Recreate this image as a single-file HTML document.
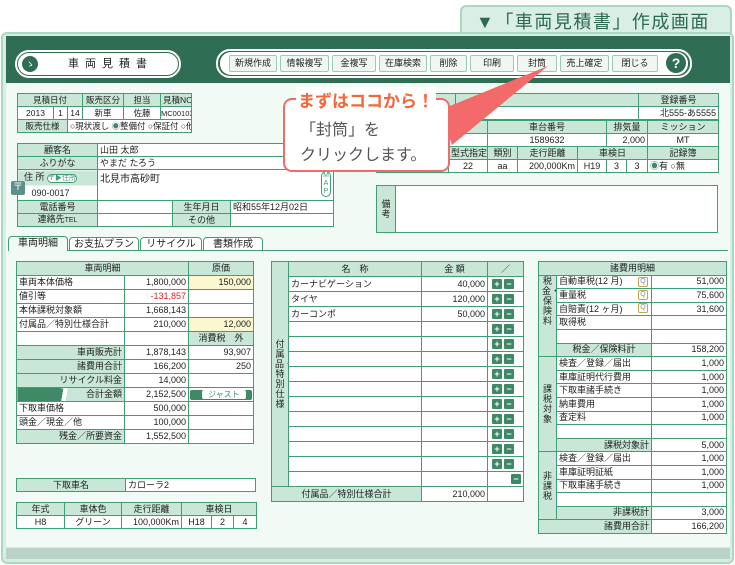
<!DOCTYPE html>
<html><head><meta charset="utf-8"><style>
*{margin:0;padding:0;box-sizing:border-box}
body{width:735px;height:565px;position:relative;background:#fff;font-family:"Liberation Sans","Noto Sans CJK JP",sans-serif;color:#222;overflow:hidden}
.a{position:absolute}
table{position:absolute;border-collapse:collapse;table-layout:fixed;font-size:9px;background:#fff}
td{border:1px solid #3f9e72;padding:0 2px;height:13px;line-height:11px;white-space:nowrap;overflow:hidden}
.h{background:#c8e7d7;text-align:center}
.r{text-align:right}.c{text-align:center}
.y{background:#fbf8cf}
.btn{position:absolute;top:55px;height:17px;background:#eef7f2;border:1px solid #9fc9b4;font-size:9px;line-height:15px;text-align:center;border-radius:2px}
.pm{display:inline-block;width:10px;height:10px;background:#3f8a66;color:#fff;font-size:9px;line-height:10px;text-align:center;margin-left:2px;font-weight:bold;border-radius:1px}
.v{white-space:normal;font-size:9px;line-height:10px;padding:0 3px}
.L td{height:14px}
.M td{height:15px}
.R td{height:13.6px}
</style></head><body>
<div class="a" style="left:460px;top:5px;width:272px;height:34px;background:#d9efe5;border:2px solid #a9d9c1;border-radius:6px 6px 0 0"></div>
<div class="a" style="left:476px;top:8px;font-size:18px;color:#2b6a4e;letter-spacing:1.5px">▼「車両見積書」作成画面</div>
<div class="a" style="left:1px;top:32px;width:733px;height:532px;background:#d7eee3;border:2px solid #a9d9c1;border-radius:6px"></div>
<div class="a" style="left:6px;top:36px;width:724px;height:47px;background:#2f6e52"></div>
<div class="a" style="left:6px;top:83px;width:724px;height:464px;background:#f2faf6"></div>
<div class="a" style="left:6px;top:548px;width:724px;height:11px;background:#bad3c7"></div>
<div class="a" style="left:15px;top:50px;width:166px;height:28px;border:2px solid #fff;border-radius:14px"></div>
<div class="a" style="left:18px;top:53px;width:160px;height:22px;background:#fff;border-radius:11px;font-size:11px;letter-spacing:6px;line-height:22px;padding-left:50px">車両見積書</div>
<div class="a" style="left:22px;top:56px;width:16px;height:16px;border-radius:8px;background:#2f6e52;color:#fff;font-size:9px;text-align:center;line-height:16px">ゝ</div>
<div class="a" style="left:216px;top:49px;width:476px;height:29px;border:2px solid #fff;border-radius:14px"></div>
<div class="a" style="left:220px;top:52px;width:468px;height:23px;background:#fff;border-radius:11px"></div>
<div class="btn" style="left:229px;width:48px">新規作成</div>
<div class="btn" style="left:280px;width:49px">情報複写</div>
<div class="btn" style="left:332px;width:44px">金複写</div>
<div class="btn" style="left:379px;width:48px">在庫検索</div>
<div class="btn" style="left:430px;width:37px">削除</div>
<div class="btn" style="left:470px;width:44px">印刷</div>
<div class="btn" style="left:517px;width:40px">封筒</div>
<div class="btn" style="left:560px;width:49px">売上確定</div>
<div class="btn" style="left:612px;width:46px">閉じる</div>
<div class="a" style="left:666px;top:53px;width:20px;height:20px;border-radius:10px;background:#2f6e52;color:#fff;font-weight:bold;font-size:14px;text-align:center;line-height:20px">?</div>

<table style="left:17px;top:93px;width:174px;font-size:8.5px">
<col style="width:36px"><col style="width:14px"><col style="width:15px"><col style="width:41px"><col style="width:37px"><col style="width:31px">
<tr><td class="h" colspan="3">見積日付</td><td class="h">販売区分</td><td class="h">担当</td><td class="h">見積NO</td></tr>
<tr><td class="c">2013</td><td class="c">1</td><td class="c">14</td><td class="c">新車</td><td class="c">佐藤</td><td class="c" style="font-size:7.5px;padding:0">MC00103</td></tr>
<tr><td class="h" colspan="2">販売仕様</td><td colspan="4">○現状渡し <span style="color:#3f8a66">◉</span>整備付 ○保証付 ○他</td></tr>
</table>

<table style="left:17px;top:143px;width:316px">
<col style="width:80px"><col style="width:75px"><col style="width:58px"><col style="width:103px">
<tr><td class="h">顧客名</td><td colspan="3">山田 太郎</td></tr>
<tr><td class="h">ふりがな</td><td colspan="3">やまだ たろう</td></tr>
<tr><td class="h" style="height:30px;background:linear-gradient(#c8e7d7 50%,#fff 50%);vertical-align:top;text-align:left;padding-left:6px;line-height:14px">住 所 <span style="font-size:7px;border:1px solid #3f9e72;border-radius:5px;background:#fff;color:#3f9e72">〒▶住所</span><br>&nbsp;&nbsp;&nbsp;090-0017</td><td colspan="3" style="vertical-align:top;padding-top:4px;position:relative;font-size:10px">北見市高砂町<span class="a" style="right:2px;top:1px;width:10px;height:26px;border:1px solid #3f9e72;border-radius:5px;font-size:7px;line-height:8px;text-align:center;white-space:normal;color:#3f9e72">M A P</span></td></tr>
<tr><td class="h">電話番号</td><td></td><td class="h">生年月日</td><td>昭和55年12月02日</td></tr>
<tr><td class="h">連絡先<span style="font-size:7px">TEL</span></td><td></td><td class="h">その他</td><td></td></tr>
</table>
<div class="a" style="left:11px;top:181px;width:14px;height:14px;background:#5f8f8a;border-radius:2px;color:#fff;font-size:10px;text-align:center;line-height:14px">〒</div>

<table style="left:376px;top:93px;width:342px">
<col style="width:79px"><col style="width:183px"><col style="width:80px">
<tr><td class="h"></td><td class="h"></td><td class="h">登録番号</td></tr>
<tr><td></td><td>ォード</td><td class="r">北555-あ5555</td></tr>
</table>
<table style="left:376px;top:120px;width:342px">
<col style="width:72px"><col style="width:39px"><col style="width:30px"><col style="width:60px"><col style="width:29px"><col style="width:20px"><col style="width:21px"><col style="width:71px">
<tr><td class="h" colspan="2"></td><td class="h" colspan="3">車台番号</td><td class="h" colspan="2">排気量</td><td class="h">ミッション</td></tr>
<tr><td colspan="2">5</td><td class="c" colspan="3">1589632</td><td class="r" colspan="2">2,000</td><td class="c">MT</td></tr>
<tr><td class="h"></td><td class="h">型式指定</td><td class="h">類別</td><td class="h">走行距離</td><td class="h" colspan="3">車検日</td><td class="h">記録簿</td></tr>
<tr><td></td><td class="c">22</td><td class="c">aa</td><td class="r">200,000Km</td><td class="c">H19</td><td class="c">3</td><td class="c">3</td><td><span style="color:#3f8a66">◉</span>有 ○無</td></tr>
</table>
<table style="left:376px;top:185px;width:342px">
<col style="width:19px"><col>
<tr><td class="h v" style="height:47px;padding:0 4px">備考</td><td></td></tr>
</table>

<div class="a" style="left:8px;top:250px;width:720px;height:1px;background:#3f9e72"></div>
<div class="a" style="left:8px;top:236px;width:60px;height:15px;background:#f2faf6;border:1px solid #3f9e72;border-bottom:none;border-radius:4px 4px 0 0;font-size:10px;text-align:center;line-height:14px">車両明細</div>
<div class="a" style="left:69px;top:237px;width:70px;height:14px;background:#fff;border:1px solid #3f9e72;border-radius:4px 4px 0 0;font-size:10px;text-align:center;line-height:13px">お支払プラン</div>
<div class="a" style="left:140px;top:237px;width:62px;height:14px;background:#fff;border:1px solid #3f9e72;border-radius:4px 4px 0 0;font-size:10px;text-align:center;line-height:13px">リサイクル</div>
<div class="a" style="left:203px;top:237px;width:60px;height:14px;background:#fff;border:1px solid #3f9e72;border-radius:4px 4px 0 0;font-size:10px;text-align:center;line-height:13px">書類作成</div>

<table class="L" style="left:16px;top:261px;width:237px">
<col style="width:108px"><col style="width:64px"><col style="width:65px">
<tr><td class="h" colspan="2">車両明細</td><td class="h">原価</td></tr>
<tr><td>車両本体価格</td><td class="r">1,800,000</td><td class="r y">150,000</td></tr>
<tr><td>値引等</td><td class="r" style="color:#e02020">-131,857</td><td></td></tr>
<tr><td>本体課税対象額</td><td class="r">1,668,143</td><td></td></tr>
<tr><td>付属品／特別仕様合計</td><td class="r">210,000</td><td class="r y">12,000</td></tr>
<tr><td></td><td></td><td class="h">消費税　外</td></tr>
<tr><td class="h r">車両販売計</td><td class="r">1,878,143</td><td class="r">93,907</td></tr>
<tr><td class="h r">諸費用合計</td><td class="r">166,200</td><td class="r">250</td></tr>
<tr><td class="h r">リサイクル料金</td><td class="r">14,000</td><td></td></tr>
<tr><td class="h r" style="background:linear-gradient(100deg,#3f8a66 0,#3f8a66 42%,#fff 42%,#fff 46%,#c8e7d7 46%)">合計金額</td><td class="r">2,152,500</td><td style="padding:1px"><div style="height:10px;background:#3f8a66;border-radius:2px;color:#3f8a66;font-size:8px;line-height:10px;padding-left:12px"><span style="background:#fff;padding:0 6px;border-radius:2px">ジャスト</span></div></td></tr>
<tr><td>下取車価格</td><td class="r">500,000</td><td></td></tr>
<tr><td>頭金／現金／他</td><td class="r">100,000</td><td></td></tr>
<tr><td class="h r">残金／所要資金</td><td class="r">1,552,500</td><td></td></tr>
</table>
<table style="left:16px;top:478px;width:240px">
<col style="width:109px"><col>
<tr><td class="h">下取車名</td><td>カローラ2</td></tr>
</table>
<table style="left:16px;top:502px;width:240px">
<col style="width:48px"><col style="width:57px"><col style="width:60px"><col style="width:30px"><col style="width:22px"><col style="width:23px">
<tr><td class="h">年式</td><td class="h">車体色</td><td class="h">走行距離</td><td class="h" colspan="3">車検日</td></tr>
<tr><td class="c">H8</td><td class="c">グリーン</td><td class="r">100,000Km</td><td class="c">H18</td><td class="c">2</td><td class="c">4</td></tr>
</table>

<table class="M" style="left:271px;top:261px;width:252px">
<col style="width:17px"><col style="width:133px"><col style="width:66px"><col style="width:36px">
<tr><td class="h v" rowspan="15">付属品・特別仕様</td><td class="h">名　称</td><td class="h">金 額</td><td class="h">／</td></tr>
<tr><td>カーナビゲーション</td><td class="r">40,000</td><td><span class="pm">+</span><span class="pm">−</span></td></tr>
<tr><td>タイヤ</td><td class="r">120,000</td><td><span class="pm">+</span><span class="pm">−</span></td></tr>
<tr><td>カーコンポ</td><td class="r">50,000</td><td><span class="pm">+</span><span class="pm">−</span></td></tr>
<tr><td></td><td></td><td><span class="pm">+</span><span class="pm">−</span></td></tr>
<tr><td></td><td></td><td><span class="pm">+</span><span class="pm">−</span></td></tr>
<tr><td></td><td></td><td><span class="pm">+</span><span class="pm">−</span></td></tr>
<tr><td></td><td></td><td><span class="pm">+</span><span class="pm">−</span></td></tr>
<tr><td></td><td></td><td><span class="pm">+</span><span class="pm">−</span></td></tr>
<tr><td></td><td></td><td><span class="pm">+</span><span class="pm">−</span></td></tr>
<tr><td></td><td></td><td><span class="pm">+</span><span class="pm">−</span></td></tr>
<tr><td></td><td></td><td><span class="pm">+</span><span class="pm">−</span></td></tr>
<tr><td></td><td></td><td><span class="pm">+</span><span class="pm">−</span></td></tr>
<tr><td></td><td></td><td><span class="pm">+</span><span class="pm">−</span></td></tr>
<tr><td></td><td></td><td class="r"><span class="pm">−</span></td></tr>
<tr><td class="h" colspan="2">付属品／特別仕様合計</td><td class="r">210,000</td><td></td></tr>
</table>

<table class="R" style="left:538px;top:261px;width:188px">
<col style="width:18px"><col style="width:95px"><col style="width:75px">
<tr><td class="h" colspan="3">諸費用明細</td></tr>
<tr><td class="h v" rowspan="6" style="vertical-align:top">税金・保険料</td><td>自動車税(12 月)</td><td class="r">51,000</td></tr>
<tr><td>重量税</td><td class="r">75,600</td></tr>
<tr><td>自賠責(12 ヶ月)</td><td class="r">31,600</td></tr>
<tr><td>取得税</td><td></td></tr>
<tr><td></td><td></td></tr>
<tr><td class="h c">税金／保険料計</td><td class="r">158,200</td></tr>
<tr><td class="h v" rowspan="7">課税対象</td><td>検査／登録／届出</td><td class="r">1,000</td></tr>
<tr><td>車庫証明代行費用</td><td class="r">1,000</td></tr>
<tr><td>下取車諸手続き</td><td class="r">1,000</td></tr>
<tr><td>納車費用</td><td class="r">1,000</td></tr>
<tr><td>査定料</td><td class="r">1,000</td></tr>
<tr><td></td><td></td></tr>
<tr><td class="h r">課税対象計</td><td class="r">5,000</td></tr>
<tr><td class="h v" rowspan="5">非課税</td><td>検査／登録／届出</td><td class="r">1,000</td></tr>
<tr><td>車庫証明証紙</td><td class="r">1,000</td></tr>
<tr><td>下取車諸手続き</td><td class="r">1,000</td></tr>
<tr><td></td><td></td></tr>
<tr><td class="h r">非課税計</td><td class="r">3,000</td></tr>
<tr><td class="h r" colspan="2">諸費用合計</td><td class="r">166,200</td></tr>
</table>
<div class="a" style="left:638px;top:277px;width:10px;height:10px;border:1px solid #c8a050;border-radius:2px;font-size:7px;line-height:8px;text-align:center;color:#888;background:#fff">Q</div>
<div class="a" style="left:638px;top:290px;width:10px;height:10px;border:1px solid #c8a050;border-radius:2px;font-size:7px;line-height:8px;text-align:center;color:#888;background:#fff">Q</div>
<div class="a" style="left:638px;top:303px;width:10px;height:10px;border:1px solid #c8a050;border-radius:2px;font-size:7px;line-height:8px;text-align:center;color:#888;background:#fff">Q</div>

<svg class="a" style="left:0;top:0" width="735" height="565"><polygon points="440,110 548,66 452,145" fill="#f36a6a"/></svg>
<div class="a" style="left:283px;top:98px;width:167px;height:74px;background:#fff;border:2px solid #f36a6a;border-radius:9px"></div>
<div class="a" style="left:296px;top:87px;font-size:17px;font-weight:bold;color:#f5663a;background:#fff;padding:0 2px">まずはココから！</div>
<div class="a" style="left:300px;top:118px;font-size:16px;color:#555;line-height:25px">「封筒」を<br>クリックします。</div>
</body></html>
